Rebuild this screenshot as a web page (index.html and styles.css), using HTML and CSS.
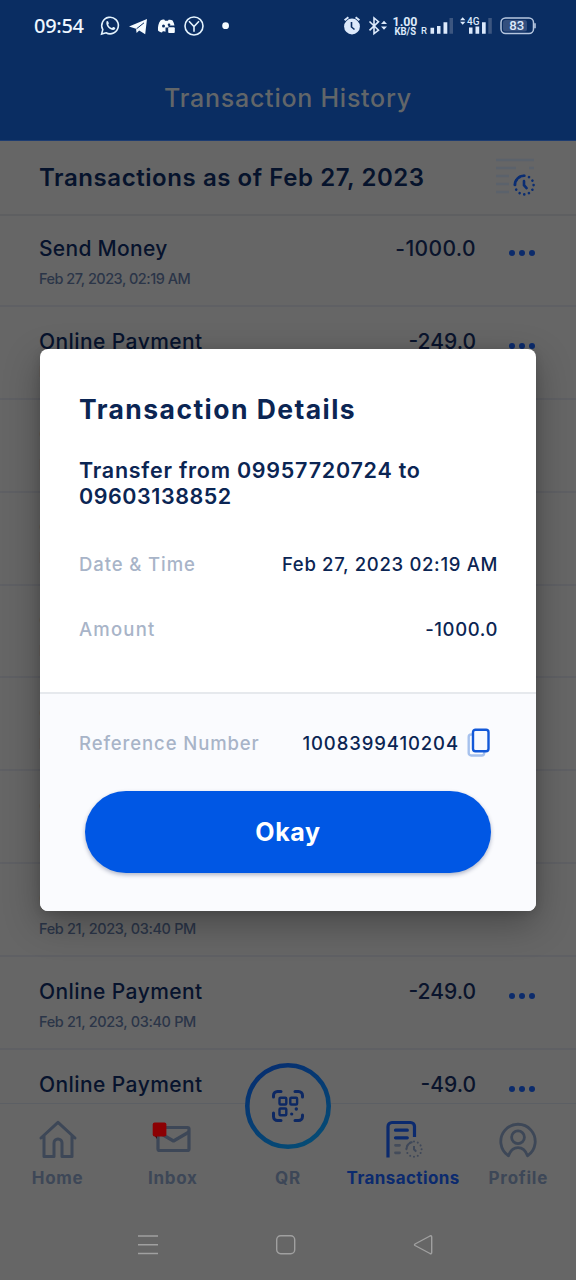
FILE: index.html
```html
<!DOCTYPE html>
<html lang="en">
<head>
<meta charset="utf-8">
<title>Transaction History</title>
<link rel="stylesheet" href="styles.css">
</head>
<body>
<div class="phone">
  <header class="top">
    <div class="status">
      <span class="clock">09:54</span>
      <svg class="status-left" width="136" height="24" viewBox="98 14 136 24">
        <g fill="none" stroke="#e4f3fd" stroke-width="1.6">
          <path d="M101.600 34l1.200-4.400a8.300 8.300 0 1 1 3.200 3.200z"/>
          <circle cx="194" cy="26" r="9"/>
          <path d="M189 21.300l5 5.200 5-5.200M194 26.500v5.300"/>
        </g>
        <path d="M106.500 21.500c1-1 1.700-.3 2.300 1.500.3.800-.8 1.200-.5 1.900.8 1.500 2 2.500 3.500 3 .7.100 1-1.300 1.900-.9 1.700.7 2 1.200 1.200 2.300-2.500 2.700-9.800-2.300-8.400-7.800z" fill="#e4f3fd"/>
        <path d="M129 26.400L147 19l-1.800 15.200-6-3.700-2.600 2.600-.6-4.400z" fill="#f5fbff"/>
        <path d="M136.500 28.800l7.500-6" stroke="#0a2d62" stroke-width="1"/>
        <path d="M158 30.500c-.3-4 .5-7.500 2.500-10 1.500-1 3-1.200 4-.7l.5 1h3l.6-1c1.500-.3 3 0 4 .8 1 1.600 1.600 3.200 1.900 5h-6v1.800h-3v4.300c-1.500 0-2-.5-2.500-.7l-1 1.600c-1.800-.3-3-1-4-2.100z" fill="#f5fbff"/>
        <circle cx="163.500" cy="26" r="1.500" fill="#0a2d62"/><circle cx="169" cy="24.800" r="1.300" fill="#0a2d62"/>
        <rect x="168.200" y="27.200" width="6.600" height="5.800" rx="1" fill="#f5fbff"/>
        <circle cx="225.600" cy="25.700" r="3.400" fill="#f5fbff"/>
      </svg>
      <svg class="status-right" width="196" height="24" viewBox="342 14 196 24">
        <circle cx="352" cy="26.500" r="7.900" fill="#dce9fb"/>
        <path d="M344.600 20.200l3.800-2.900M359.400 20.200l-3.800-2.900" stroke="#dce9fb" stroke-width="2"/>
        <path d="M351.500 22v5l3 2.500" fill="none" stroke="#0a2d62" stroke-width="1.600"/>
        <path d="M369.500 21.500l9 8.700-4.500 3.500V18l4.500 3.700-9 8.700" fill="none" stroke="#dce9fb" stroke-width="1.600"/>
        <path d="M381 24l3-3.300 3 3.300zM381 26.500l3 3.300 3-3.300z" fill="#dce9fb"/>
        <path d="M430.500 27.800h3.600v6h-3.600zM437 26h3.500v7.800H437zM443.500 22.200h3.800v11.600h-3.800z" fill="#dce9fb"/>
        <path d="M449.500 18h3.500v15.800h-3.500zM488.300 18h3.500v15.800h-3.500z" fill="#3c5680"/>
        <path d="M469 27.500h3.500v6.300H469zM475.500 26.500h3.700v7.300h-3.700zM482 22.200h3.700v11.600H482z" fill="#dce9fb"/>
        <path d="M460 20.300l2.700-3 2.700 3zM460 21.800l2.700 3 2.700-3z" fill="#dce9fb"/>
        <rect x="501" y="18" width="32.500" height="15.500" rx="4.500" fill="none" stroke="#b6c6df" stroke-width="1.500"/>
        <rect x="503" y="20" width="24" height="11.500" rx="2.500" fill="#344f7e"/>
        <path d="M535 23.300v5" stroke="#b6c6df" stroke-width="1.600"/>
        <g class="status-text">
          <text x="392.500" y="25.500" font-size="12.500" font-weight="700" textLength="25" lengthAdjust="spacingAndGlyphs">1.00</text>
          <text x="394.500" y="35" font-size="10" font-weight="700" textLength="21.500" lengthAdjust="spacingAndGlyphs">KB/S</text>
          <text x="421" y="34.200" font-size="9.500">R</text>
          <text x="467" y="25" font-size="11" textLength="12.500" lengthAdjust="spacingAndGlyphs">4G</text>
          <text x="509.300" y="30.200" font-size="12.500" textLength="15" lengthAdjust="spacingAndGlyphs">83</text>
        </g>
      </svg>
    </div>
    <h1 class="title">Transaction History</h1>
  </header>

  <section class="summary">
    <h2 class="summary-title">Transactions as of Feb 27, 2023</h2>
    <svg width="40" height="40" viewBox="0 0 40 40">
      <path d="M0 2h38M0 10h20M33 10h5M0 18h13M0 26h13M0 34h13" stroke="#5b626b" stroke-width="2.500"/>
      <path d="M18.800 27.500a9.300 9.300 0 0 1 9.500-9.700" fill="none" stroke="#0a2d72" stroke-width="2.600"/>
      <circle cx="28.300" cy="27.100" r="9.300" fill="none" stroke="#0a2d72" stroke-width="2.600" stroke-linecap="round" stroke-dasharray="0.010 4.857" pathLength="58.290"/>
      <path d="M28 23v4.200l2.600 2.900" fill="none" stroke="#0a2d72" stroke-width="2.600" stroke-linecap="round"/>
    </svg>
  </section>

  <main class="list">
    <article class="row"><div class="info"><h3 class="name send">Send Money</h3><p class="date latest">Feb 27, 2023, 02:19 AM</p></div><span class="amount large">-1000.0</span><span class="more"><i></i><i></i><i></i></span></article>
    <article class="row"><div class="info"><h3 class="name">Online Payment</h3><p class="date">Feb 21, 2023, 03:40 PM</p></div><span class="amount">-249.0</span><span class="more"><i></i><i></i><i></i></span></article>
    <article class="row"><div class="info"><h3 class="name">Online Payment</h3><p class="date">Feb 21, 2023, 03:40 PM</p></div><span class="amount">-249.0</span><span class="more"><i></i><i></i><i></i></span></article>
    <article class="row"><div class="info"><h3 class="name">Online Payment</h3><p class="date">Feb 21, 2023, 03:40 PM</p></div><span class="amount">-249.0</span><span class="more"><i></i><i></i><i></i></span></article>
    <article class="row"><div class="info"><h3 class="name">Online Payment</h3><p class="date">Feb 21, 2023, 03:40 PM</p></div><span class="amount">-249.0</span><span class="more"><i></i><i></i><i></i></span></article>
    <article class="row"><div class="info"><h3 class="name">Online Payment</h3><p class="date">Feb 21, 2023, 03:40 PM</p></div><span class="amount">-249.0</span><span class="more"><i></i><i></i><i></i></span></article>
    <article class="row"><div class="info"><h3 class="name">Online Payment</h3><p class="date">Feb 21, 2023, 03:40 PM</p></div><span class="amount">-249.0</span><span class="more"><i></i><i></i><i></i></span></article>
    <article class="row"><div class="info"><h3 class="name">Online Payment</h3><p class="date">Feb 21, 2023, 03:40 PM</p></div><span class="amount">-249.0</span><span class="more"><i></i><i></i><i></i></span></article>
    <article class="row"><div class="info"><h3 class="name">Online Payment</h3><p class="date">Feb 21, 2023, 03:40 PM</p></div><span class="amount">-249.0</span><span class="more"><i></i><i></i><i></i></span></article>
    <article class="row"><div class="info"><h3 class="name">Online Payment</h3></div><span class="amount">-49.0</span><span class="more"><i></i><i></i><i></i></span></article>
  </main>

  <nav class="tabs">
    <a class="tab">
      <svg width="40" height="40" viewBox="0 0 40 40" fill="none" stroke="#3d4757" stroke-width="3" stroke-linejoin="round" stroke-linecap="round"><path d="M3 19L20 3.300 37 19M6 17v20.500h10V24a4 4 0 0 1 8 0v13.500h10V17"/></svg>
      <span class="short">Home</span>
    </a>
    <a class="tab">
      <svg width="40" height="40" viewBox="0 0 40 40"><g fill="none" stroke="#3d4757" stroke-width="3.200" stroke-linejoin="round"><rect x="5" y="8.500" width="31" height="23" rx="1.500"/><path d="M5 13l15.500 9L36 13"/></g><path d="M1 16l3 4v-4z" fill="#40080c"/><rect x="-0.300" y="3.600" width="13.700" height="14" rx="2" fill="#8c0003"/></svg>
      <span class="short">Inbox</span>
    </a>
    <a class="tab">
      <span class="qr-button">
        <svg width="88" height="88" viewBox="0 0 88 88">
          <defs><linearGradient id="ring" x1=".2" y1="0" x2=".7" y2="1"><stop offset="0" stop-color="#062e70"/><stop offset="1" stop-color="#054b75"/></linearGradient></defs>
          <circle cx="44" cy="44" r="40.700" fill="#666" stroke="url(#ring)" stroke-width="4.600"/>
          <g fill="none" stroke="#0d2863" stroke-width="3" stroke-linecap="round">
            <path d="M29.500 35v-1.500a4 4 0 0 1 4-4H37M51 29.500h3.500a4 4 0 0 1 4 4V35M58.500 53v1.500a4 4 0 0 1-4 4H51M37 58.500h-3.500a4 4 0 0 1-4-4V51"/>
          </g>
          <g fill="none" stroke="#0d2863" stroke-width="2.400"><rect x="35.500" y="35.700" width="6.800" height="6.800" rx="1"/><rect x="46.300" y="35.700" width="6.800" height="6.800" rx="1"/><rect x="35.500" y="46.500" width="6.800" height="6.800" rx="1"/></g>
          <circle cx="47.700" cy="52" r="1.600" fill="#0d2863"/><circle cx="52.300" cy="47" r="1.700" fill="#0d2863"/>
        </svg>
      </span>
      <span class="short">QR</span>
    </a>
    <a class="tab active">
      <svg width="40" height="40" viewBox="0 0 40 40" fill="none" stroke="#0b2a6e" stroke-width="3.200"><path d="M5 38.500V7.500a4 4 0 0 1 4-4h18.500a4 4 0 0 1 4 4V18"/><path d="M12.500 11.200h11.800M12.500 18.800h11.800" stroke-linecap="round"/><path d="M12.500 26.300h4M12.500 33.800h4" stroke="#444c5b" stroke-width="2.800" stroke-linecap="round"/><path d="M23.500 30a7.700 7.700 0 0 1 6-7" stroke="#3f4859" stroke-width="2"/><circle cx="31" cy="30.200" r="7.600" stroke="#3f4859" stroke-width="2" stroke-linecap="round" stroke-dasharray="0.010 3.990" pathLength="48"/><path d="M31 27v3.300l2.200 2.300" stroke="#3f4859" stroke-width="2"/></svg>
      <span>Transactions</span>
    </a>
    <a class="tab">
      <svg width="40" height="40" viewBox="0 0 40 40" fill="none" stroke="#3d4757" stroke-width="2.800" stroke-linejoin="round"><path d="M10.500 36.800A17.200 17.200 0 1 1 29.500 36.800C27.500 31 24.500 28.600 20 28.600S12.500 31 10.500 36.800z"/><circle cx="20" cy="18.300" r="6.400"/></svg>
      <span class="short">Profile</span>
    </a>
  </nav>

  <div class="system">
    <svg width="22" height="22" viewBox="0 0 22 22"><path d="M1 2h20M1 10.800h20M1 19.500h20" stroke="#a0a0a0" stroke-width="1.400"/></svg>
    <svg width="22" height="22" viewBox="0 0 22 22"><rect x="1.700" y="1.700" width="18" height="18" rx="4" fill="none" stroke="#a0a0a0" stroke-width="1.400"/></svg>
    <svg width="22" height="22" viewBox="0 0 22 22"><path d="M3 10q-1 .8 0 1.500L18 19.500q1.700.7 1.700-1V3q0-1.700-1.700-1z" fill="none" stroke="#a0a0a0" stroke-width="1.400" stroke-linejoin="round"/></svg>
  </div>

  <div class="dialog" role="dialog">
    <div class="dialog-body">
      <h2 class="dialog-title">Transaction Details</h2>
      <p class="dialog-desc">Transfer from 09957720724 to <span class="number">09603138852</span></p>
      <dl class="pair"><dt class="dt-date">Date &amp; Time</dt><dd class="dd-date">Feb 27, 2023 02:19 AM</dd></dl>
      <dl class="pair pair-amount"><dt class="dt-amount">Amount</dt><dd class="dd-amount">-1000.0</dd></dl>
    </div>
    <div class="dialog-foot">
      <dl class="pair reference"><dt class="dt-ref">Reference Number</dt><dd class="dd-ref">1008399410204</dd>
        <svg width="24" height="30" viewBox="0 0 24 30" fill="none" stroke-width="2.400"><rect x="1.700" y="6.500" width="15.500" height="21" rx="2.500" stroke="#a6c1ed"/><rect x="6" y="1.700" width="15.500" height="21.500" rx="2.500" fill="#f8faff" stroke="#1258d8"/></svg>
      </dl>
      <button class="okay">Okay</button>
    </div>
  </div>
</div>
</body>
</html>
```
FILE: styles.css
```css
* { box-sizing: border-box; margin: 0; padding: 0; }
body { width: 576px; height: 1280px; overflow: hidden; background: #666; font-family: Inter, "Noto Sans", sans-serif; }
.phone { position: relative; width: 576px; height: 1280px; overflow: hidden; display: flex; flex-direction: column; background: #666; }
svg { display: block; flex: none; overflow: visible; }

.top { flex: none; height: 141px; background: #0a2d62; border-bottom: 1px solid #1d3c71; }
.status { height: 52px; padding: 0 38px 0 34px; display: flex; align-items: center; }
.clock { width: 64px; font: 500 20px/24px "Noto Sans", sans-serif; color: #eef7ff; letter-spacing: -.3px; }
.status-right { margin-left: auto; }
.status-text { font-family: Roboto, sans-serif; font-weight: 500; fill: #dce9fb; }
.title { padding-top: 30px; text-align: center; font-size: 25px; line-height: 32px; font-weight: 500; letter-spacing: .75px; color: #626669; }

.summary { flex: none; height: 75px; padding: 0 40px 0 39px; display: flex; align-items: center; justify-content: space-between; border-bottom: 2px solid #5e5f61; }
.summary-title { font-size: 24px; line-height: 30px; font-weight: 600; letter-spacing: .57px; color: #06132c; white-space: nowrap; }

.list { flex: none; height: 889px; margin-top: -2px; overflow: hidden; }
.row { height: 92.875px; padding: 21.300px 41px 0 39px; display: flex; align-items: flex-start; border-bottom: 2px solid #5f6064; }
.info { flex: 1; }
.name { font-size: 21px; line-height: 28px; font-weight: 500; letter-spacing: .42px; color: #07132d; }
.name.send { letter-spacing: .3px; }
.date { margin-top: 7px; font-size: 14.500px; line-height: 18px; font-weight: 500; color: #2b3548; letter-spacing: -.35px; }
.date.latest { letter-spacing: -.5px; }
.amount { margin-right: -1px; font-size: 21px; line-height: 28px; font-weight: 500; letter-spacing: 0; color: #0a142c; }
.amount.large { letter-spacing: .4px; }
.more { width: 60px; padding-top: 14.500px; display: flex; justify-content: flex-end; gap: 4px; }
.more i { width: 6px; height: 6px; border-radius: 50%; background: #0c2b6b; }

.tabs { flex: none; height: 97px; display: grid; grid-template-columns: repeat(5, 115.200px); border-top: 1px solid #5c5f64; background: #666; }
.tab { display: flex; flex-direction: column; align-items: center; padding-top: 14.500px; font-size: 17px; line-height: 22px; font-weight: 700; color: #3d4757; letter-spacing: .4px; }
.tab span { margin-top: 8.500px; }
.tab .short { letter-spacing: .75px; }
.tab.active { color: #0b2a6e; }
.tab .qr-button { width: 88px; height: 40px; margin-top: 0; display: flex; align-items: flex-end; }
.qr-button svg { margin-bottom: 8.500px; }

.system { flex: none; height: 80px; display: flex; padding: 34px 142px 0 137px; justify-content: space-between; }

.dialog { position: absolute; left: 40px; top: 349px; width: 496px; height: 562px; border-radius: 8px; overflow: hidden; background: #fff; color: #0b2553; box-shadow: 0 12px 36px rgba(0,0,0,.3), 0 2px 8px rgba(0,0,0,.12); }
.dialog-body { height: 343px; padding: 42px 38px 0 39px; }
.dialog-title { font-size: 26.500px; line-height: 36px; font-weight: 700; letter-spacing: 1.450px; white-space: nowrap; }
.dialog-desc { margin-top: 30px; font-size: 21.500px; line-height: 26px; font-weight: 600; letter-spacing: .75px; white-space: nowrap; }
.number { display: block; letter-spacing: .55px; }
.pair { display: flex; align-items: center; justify-content: space-between; margin-top: 41px; font-size: 18.500px; line-height: 28px; font-weight: 500; }
.pair dt { color: #a8b4c8; letter-spacing: .9px; }
.pair dt.dt-amount { letter-spacing: 1.200px; }
.dd-date { letter-spacing: .67px; }
.dd-amount { letter-spacing: .6px; }
.pair-amount { margin-top: 37px; }
.dialog-foot { height: 219px; padding: 33.500px 45px 0; background: #fafbfe; border-top: 2px solid #e6e9ed; }
.reference { margin: 0 0 0 -6px; line-height: 30px; }
.reference dd { margin-left: auto; margin-right: 8px; letter-spacing: .9px; }
.okay { display: block; width: 406px; height: 82px; margin-top: 33px; border: 0; border-radius: 41px; background: #0057e4; color: #fff; font: 700 25px/82px Inter, sans-serif; letter-spacing: .6px; box-shadow: 0 2px 4px rgba(0,20,70,.3); }
```
